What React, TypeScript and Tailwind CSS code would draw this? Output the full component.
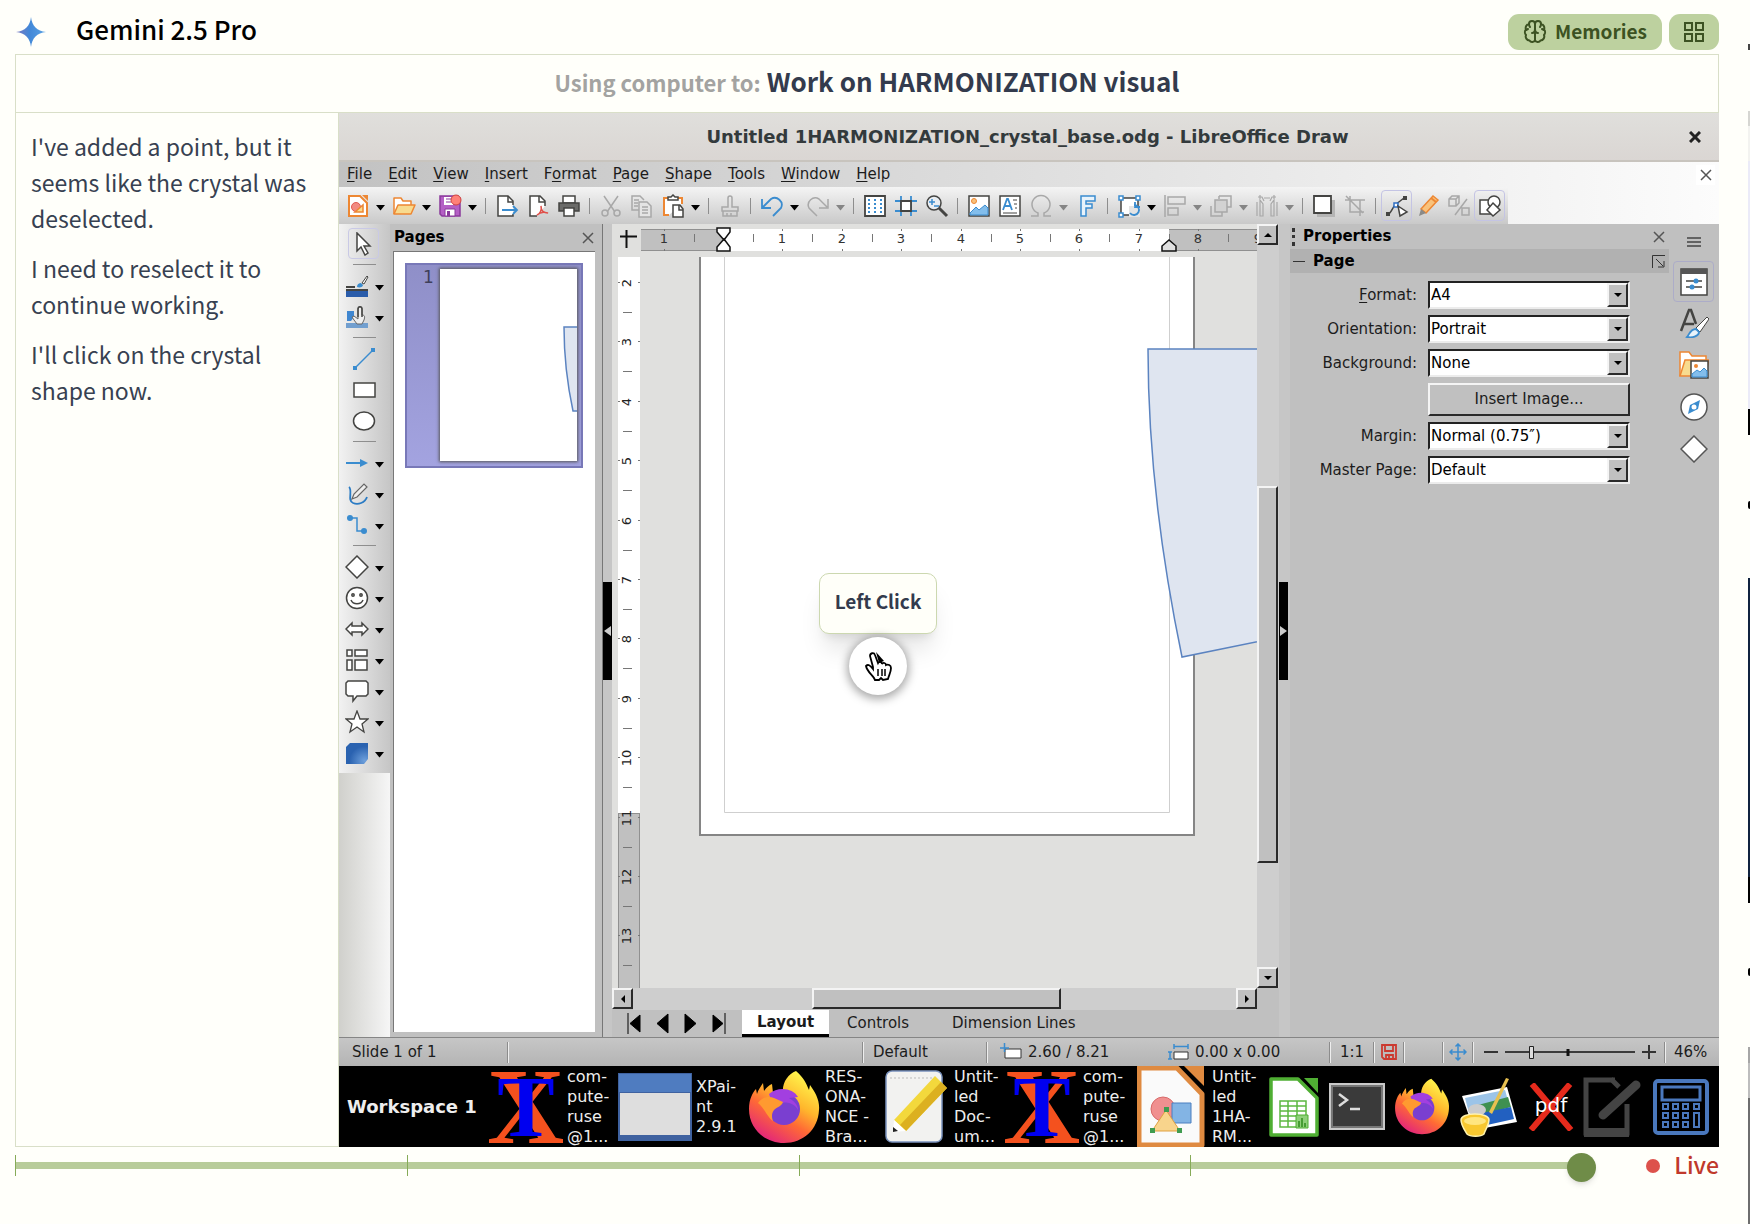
import React from 'react';
import clsx from 'clsx';

const UI_FONT = "font-['DejaVu_Sans',sans-serif]";

const DARK = '#444442';
const BLUE = '#3a8ccf';
const DIM = '#a8a8a8';

type IconName = keyof typeof ICONS;

const ICONS = {
    newDoc: (
        <g fill="none" stroke="#ed8733" strokeWidth="2">
            <path d="M3 2h11l7 7v13H3z" fill="#fff" />
            <path d="M16 1h6v6z" fill="#ed8733" stroke="none" />
            <circle cx="10" cy="13" r="4.500" fill="#f28b82" stroke="#e05a52" strokeWidth="1" />
            <path d="M9 18l8-7v7z" fill="#f8db8f" strokeWidth="1.500" />
        </g>
    ),
    open: (
        <g stroke="#ed8733" strokeWidth="1.500" strokeLinejoin="round">
            <path d="M2 20V4h7l2 3h8v4" fill="#fff" />
            <path d="M6 11h17l-4 9H2z" fill="#f8db8f" />
        </g>
    ),
    save: (
        <g>
            <path d="M2 2h18l2 2v18H4l-2-2z" fill="#b45fc5" stroke="#8a3a9c" strokeWidth="1.500" />
            <path d="M6 3h9v8H6z" fill="#fff" />
            <path d="M8 5h6M8 8h5" stroke="#8a3a9c" />
            <path d="M7 15h10v7H7z" fill="#fff" stroke="#8a3a9c" />
            <path d="M9 17h3v5H9z" fill="#8a3a9c" />
            <circle cx="18" cy="6" r="5" fill="#ff8078" stroke="#d0453f" />
        </g>
    ),
    exportDoc: (
        <g fill="none" stroke={DARK} strokeWidth="1.500">
            <path d="M18 11V7l-5-5H3v20h15v-2" fill="#fff" />
            <path d="M13 2v6h5" />
            <path d="M7 16h15M18 12l4 4-4 4" stroke={BLUE} strokeWidth="1.800" />
        </g>
    ),
    pdf: (
        <g fill="none" stroke={DARK} strokeWidth="1.500">
            <path d="M11 22H4V2h10l5 5v5" fill="#fff" />
            <path d="M13 2v6h6" />
            <path d="M15 12c1 4-1 8-4 9 3-3 8-3 11-2-4 0-7-2-7-7z" stroke="#e0504a" />
        </g>
    ),
    print: (
        <g stroke={DARK} strokeWidth="1.500">
            <path d="M6 2h12v7H6z" fill="#fff" />
            <path d="M2 9h20v8H2z" fill="#6b6b69" />
            <path d="M7 14h10v8H7z" fill="#fff" />
        </g>
    ),
    cut: (
        <g fill="none" stroke={DIM} strokeWidth="1.500">
            <path d="M5 2l11 16M19 2L8 18" />
            <circle cx="6" cy="19" r="3" />
            <circle cx="18" cy="19" r="3" />
        </g>
    ),
    copy: (
        <g fill="none" stroke={DIM} strokeWidth="1.500">
            <path d="M9 16H2V2h8l4 4" />
            <path d="M9 8h8l4 4v11H9z" fill="#e4e4e4" />
            <path d="M4 6h5M4 9h4M4 12h4M12 13h6M12 16h6M12 19h6" />
        </g>
    ),
    paste: (
        <g fill="none" strokeWidth="2">
            <path d="M8 21H3V4h18v6" stroke="#ed8733" fill="#fff" />
            <path d="M7 6V3h3l2-2 2 2h3v3z" fill="#fff" stroke={DARK} strokeWidth="1.500" />
            <path d="M12 11h7l3 4v8H12z" fill="#fff" stroke={DARK} strokeWidth="1.500" />
            <path d="M18 11v5h4" stroke={DARK} strokeWidth="1.500" />
        </g>
    ),
    clone: (
        <g fill="none" stroke={DIM} strokeWidth="1.500">
            <path d="M10 13V4a2 2 0 0 1 4 0v9h6v4H4v-4z" />
            <path d="M5 17v5h14v-5M9 22v-3M13 22v-3" />
        </g>
    ),
    undo: <path d="M2 5v9h9M3 13L11 5a7 7 0 0 1 10 9l-8 8" fill="none" stroke={BLUE} strokeWidth="1.800" />,
    redo: <path d="M22 5v9h-9M21 13L13 5a7 7 0 0 0-10 9l8 8" fill="none" stroke={DIM} strokeWidth="1.500" />,
    grid: (
        <g>
            <path d="M2 2h20v20H2z" fill="#fff" stroke={DARK} strokeWidth="1.800" />
            <path d="M5 6h14M5 10h14M5 14h14M5 18h14" stroke={BLUE} strokeWidth="2" strokeDasharray="2 4" />
        </g>
    ),
    guides: (
        <g fill="none">
            <path d="M1 7h22M1 17h22M7 2v20M17 2v20" stroke={BLUE} strokeWidth="1.800" />
            <path d="M7 7h10v10H7z" fill="#fff" stroke={DARK} strokeWidth="1.800" />
        </g>
    ),
    zoom: (
        <g fill="none" stroke={DARK} strokeWidth="1.500">
            <circle cx="9" cy="9" r="7" fill="#e9eef3" />
            <path d="M14 14l8 8" strokeWidth="3" />
            <path d="M4 8h6M7 5v6M9 12h5" stroke={BLUE} />
        </g>
    ),
    image: (
        <g>
            <path d="M2 2h20v20H2z" fill="#fff" stroke={DARK} strokeWidth="1.500" />
            <path d="M3 19l6-6 3 3 6-5 3 3v7H3z" fill="#83beec" stroke={BLUE} />
            <circle cx="7" cy="7" r="2.500" fill="#f9c27b" stroke="#ed8733" />
        </g>
    ),
    textBox: (
        <g>
            <path d="M2 2h20v20H2z" fill="#fff" stroke={DARK} strokeWidth="1.500" />
            <path d="M5 16l4-11h1l4 11M6 12h7" fill="none" stroke={BLUE} strokeWidth="1.800" />
            <path d="M15 6h4M16 10h3M17 14h2M5 19h14" stroke={DARK} />
        </g>
    ),
    omega: <path d="M2 22h7v-3a9 9 0 1 1 6 0v3h7" fill="none" stroke={DIM} strokeWidth="1.500" />,
    fontwork: <path d="M6 2h14v5h-9v3h6v4h-6v8H6z" fill="#e8f3fb" stroke={BLUE} strokeWidth="1.500" />,
    transform: (
        <g fill="none">
            <path d="M4 4h17v17H4z" fill="#fff" stroke={DARK} strokeWidth="1.500" />
            <path d="M12 12h11v11H12z" fill="#e4e4e4" />
            <path d="M13 19a5 5 0 1 0 4-8M18 8v5h5" stroke={BLUE} strokeWidth="1.800" />
            <path d="M2 2h4v4H2zM19 2h4v4h-4zM2 19h4v4H2z" fill="#fff" stroke={BLUE} strokeWidth="1.500" />
        </g>
    ),
    align: <path d="M2 1v22M5 3h17v7H5zM5 14h10v7H5z" fill="none" stroke={DIM} strokeWidth="1.500" />,
    arrange: (
        <g fill="none" stroke={DIM} strokeWidth="1.500">
            <path d="M10 2h12v11h-4M10 2v3M2 12v10h11v-4" />
            <path d="M6 6h12v12H6z" fill="#d2d2d2" />
        </g>
    ),
    distribute: <path d="M2 8v14M22 8v14M5 6v16h3V10zM19 6v16h-3V10zM3 3h4l2 4M21 3h-4l-2 4M5 1v4M19 1v4M9 4h6" fill="none" stroke={DIM} strokeWidth="1.200" />,
    shadow: (
        <g>
            <path d="M5 6h18v17H5z" fill="#b5b5b5" />
            <path d="M2 2h17v17H2z" fill="#fff" stroke={DARK} strokeWidth="1.800" />
        </g>
    ),
    crop: <path d="M2 6h20M7 2v16h14M17 6v16M3 2l17 17" fill="none" stroke={DIM} strokeWidth="1.500" />,
    points: (
        <g fill="none">
            <path d="M4 20c3-3 4-7 6-9l9-7" stroke={DARK} strokeWidth="1.500" />
            <path d="M1 18h4v4H1zM18 2h4v4h-4z" fill={DARK} />
            <path d="M9 9h4v4H9z" fill="#fff" stroke="#2f6fc4" strokeWidth="1.500" />
            <path d="M13 12l9 6-7 4z" fill="#fff" stroke={DARK} strokeWidth="1.500" />
        </g>
    ),
    pencil: (
        <g>
            <path d="M5 15L17 2l5 4L10 19z" fill="#f9c27b" stroke="#ed8733" strokeWidth="1.500" />
            <path d="M5 15l5 4-7 3z" fill="#8a8a88" />
            <path d="M15 4l5 4" stroke="#ed8733" strokeWidth="2" />
        </g>
    ),
    extrusion: <path d="M2 5l3-3h7v7l-3 3H2zM2 5h7v7M9 5l3-3M20 5L8 21M15 14h7v7h-7z" fill="none" stroke={DIM} strokeWidth="1.500" />,
    shapes: (
        <g fill="#fff" stroke={DARK} strokeWidth="1.500">
            <path d="M2 6h12v14H2z" />
            <circle cx="16" cy="8" r="6" />
            <path d="M15 9l7 7-7 6-6-6z" />
        </g>
    ),
    pointer: <path d="M5 1v18l4-4 4 8 3-2-4-7h6z" fill="#fff" stroke={DARK} strokeWidth="1.500" />,
    lineColor: (
        <g>
            <path d="M1 17h22v6H1z" fill="#2a5caa" />
            <path d="M1 13h9M1 16h22" stroke={DARK} strokeWidth="2" />
            <path d="M12 13c0-3 2-4 4-4l2 2c0 2-3 3-6 2z" fill={BLUE} />
            <path d="M17 9l5-7 1 1-4 7z" fill="#fff" stroke={DARK} />
        </g>
    ),
    fillColor: (
        <g>
            <path d="M1 18h22v5H1z" fill="#729fcf" />
            <path d="M2 16V6h7v6l-3 4z" fill="#3f86d0" />
            <path d="M9 15l-2-3 2-1 4 3V4c0-3 4-3 4 0v6c3 0 3 2 2 5l-2 4h-5z" fill="#eee" stroke="#666" />
            <path d="M13 12V4c0-3 4-3 4 0v8" fill="none" stroke={DARK} strokeWidth="1.500" />
        </g>
    ),
    line: (
        <g>
            <path d="M3 21L21 3" stroke={BLUE} strokeWidth="1.500" />
            <path d="M1 19h4v4H1zM19 1h4v4h-4z" fill={BLUE} />
        </g>
    ),
    rect: <path d="M2 5h21v14H2z" fill="#fff" stroke={DARK} strokeWidth="1.500" />,
    ellipse: <ellipse cx="12" cy="12" rx="10.500" ry="9" fill="#fff" stroke={DARK} strokeWidth="1.500" />,
    arrowLine: (
        <g fill={BLUE}>
            <path d="M1 11h15v2H1z" />
            <path d="M15 8l8 4-8 4z" />
        </g>
    ),
    curve: (
        <g fill="none">
            <path d="M4 5c4 3-2 14 4 16 5 2 12 0 14-6" stroke="#2a7bc4" strokeWidth="1.800" />
            <path d="M7 17l2-5L19 2l3 3-10 10z" fill="#eee" stroke="#666" strokeWidth="1.200" />
        </g>
    ),
    connector: (
        <g fill={BLUE}>
            <path d="M5 5h7v13h8" fill="none" stroke={BLUE} strokeWidth="1.500" />
            <circle cx="5" cy="5" r="3" />
            <circle cx="19" cy="18" r="3" />
        </g>
    ),
    diamond: <path d="M12 1l11 11-11 11L1 12z" fill="#fff" stroke={DARK} strokeWidth="1.500" />,
    smiley: (
        <g fill="none" stroke={DARK} strokeWidth="1.500">
            <circle cx="12" cy="12" r="10.500" fill="#fff" />
            <path d="M6 14c2 5 10 5 12 0" />
            <circle cx="8" cy="9" r="1.200" />
            <circle cx="16" cy="9" r="1.200" />
        </g>
    ),
    doubleArrow: <path d="M1 12l6-6v3h10V6l6 6-6 6v-3H7v3z" fill="#fff" stroke={DARK} strokeWidth="1.500" />,
    flowchart: <path d="M2 2h5v6H2zM10 2h12v6H10zM2 12h5v10H2zM10 12h12v10H10z" fill="#fff" stroke={DARK} strokeWidth="1.500" />,
    callout: <path d="M3 2h18l2 2v11l-2 2H12l-4 5v-5H3l-2-2V4z" fill="#fff" stroke={DARK} strokeWidth="1.500" />,
    star: <path d="M12 1l3 8h8l-6 5 2 8-7-5-7 5 2-8-6-5h8z" fill="#fff" stroke={DARK} strokeWidth="1.300" />,
    solid: (
        <g>
            <defs>
                <radialGradient id="solid" cx="0.850" cy="0.850" r="0.700">
                    <stop offset="0" stopColor="#6ea0dc" />
                    <stop offset="1" stopColor="#2a62b0" />
                </radialGradient>
            </defs>
            <path d="M1 6l4-4h18v16l-4 5H1z" fill="url(#solid)" />
        </g>
    ),
};

type Tool = IconName | '|' | 'v' | 'x';

// '|' is a separator, 'v' an active drop-down arrow, 'x' a disabled one
const STANDARD_BAR: Tool[] = [
    'newDoc', 'v', 'open', 'v', 'save', 'v', '|',
    'exportDoc', 'pdf', 'print', '|',
    'cut', 'copy', 'paste', 'v', '|',
    'clone', '|', 'undo', 'v', 'redo', 'x', '|',
    'grid', 'guides', 'zoom', '|',
    'image', 'textBox', 'omega', 'x', 'fontwork', '|',
    'transform', 'v', 'align', 'x', 'arrange', 'x', 'distribute', 'x', '|',
    'shadow', 'crop', '|',
    'points', 'pencil', 'extrusion', 'shapes',
];

const DRAWING_BAR: [Tool, boolean][] = [
    ['pointer', false], ['|', false],
    ['lineColor', true], ['fillColor', true], ['|', false],
    ['line', false], ['rect', false], ['ellipse', false], ['|', false],
    ['arrowLine', true], ['curve', true], ['connector', true], ['|', false],
    ['diamond', true], ['smiley', true], ['doubleArrow', true], ['flowchart', true],
    ['callout', true], ['star', true], ['solid', true],
];

const MENUS: [string, string, string][] = [
    ['', 'F', 'ile'], ['', 'E', 'dit'], ['', 'V', 'iew'], ['', 'I', 'nsert'], ['F', 'o', 'rmat'],
    ['', 'P', 'age'], ['', 'S', 'hape'], ['', 'T', 'ools'], ['', 'W', 'indow'], ['', 'H', 'elp'],
];

const RAISED = 'border-2 border-t-[#f4f4f4] border-l-[#f4f4f4] border-b-[#2a2a2a] border-r-[#2a2a2a] bg-[#c0c0c0]';
const SUNKEN = 'border-2 border-t-[#222] border-l-[#222] border-b-[#ececec] border-r-[#ececec]';

const ToolIcon = ({ name }: { name: IconName }) => (
    <svg viewBox="0 0 24 24" className="size-6 shrink-0" aria-hidden="true">{ICONS[name]}</svg>
);

const Caret = ({ dim = false }: { dim?: boolean }) => (
    <svg viewBox="0 0 9 6" className="h-[6px] w-[9px]" aria-hidden="true">
        <path d="M0 0h9L4.500 5.500z" fill={dim ? '#858585' : '#000'} />
    </svg>
);

const Cross = ({ className }: { className: string }) => (
    <svg viewBox="0 0 12 12" className={className} aria-hidden="true">
        <path d="M1 1l10 10M11 1L1 11" stroke="currentColor" strokeWidth="1.500" fill="none" />
    </svg>
);

const Header = () => (
    <header className="flex h-[54px] items-center">
        <svg viewBox="0 0 32 32" className="mt-[10px] size-8" aria-hidden="true">
            <defs>
                <linearGradient id="gem" x1="0" y1="0" x2="1" y2="0">
                    <stop offset="0" stopColor="#7a78c0" />
                    <stop offset="0.450" stopColor="#4288d8" />
                    <stop offset="1" stopColor="#5aa2e4" />
                </linearGradient>
            </defs>
            <path d="M16 1c1 9 6 14 15 15-9 1-14 6-15 15-1-9-6-14-15-15 9-1 14-6 15-15z" fill="url(#gem)" />
        </svg>
        <h1 className="mt-1 ml-[29px] text-[26px] leading-8 font-medium text-black">Gemini 2.5 Pro</h1>
        <div className="mt-[10px] ml-auto flex gap-[7px]">
            <button className="flex h-9 items-center gap-2 rounded-[11px] bg-[#bdd19f] px-[15px] text-[19px] font-semibold text-[#3c5222]">
                <svg viewBox="0 0 24 24" className="size-6" fill="none" stroke="currentColor" strokeWidth="2" strokeLinecap="round" strokeLinejoin="round" aria-hidden="true">
                    <path d="M12 4a3 3 0 0 0-6 0 4 4 0 0 0-3 5.500A4 4 0 0 0 3 15a4 4 0 0 0 3.500 5.500A3 3 0 0 0 12 20zM12 4a3 3 0 0 1 6 0 4 4 0 0 1 3 5.500A4 4 0 0 1 21 15a4 4 0 0 1-3.500 5.500A3 3 0 0 1 12 20" />
                    <path d="M9 13c2 0 3-2 3-4 0 2 1 4 3 4M6 4c0 1 0 2 1 3M18 4c0 1 0 2-1 3M3 10l2-1M21 10l-2-1" />
                </svg>
                <span className="pb-[2px] leading-6">Memories</span>
            </button>
            <button className="flex h-9 w-[50px] items-center justify-center rounded-[11px] bg-[#bdd19f] text-[#3c5222]" aria-label="Grid view">
                <svg viewBox="0 0 20 20" className="size-5" fill="none" stroke="currentColor" strokeWidth="2" aria-hidden="true">
                    <path d="M1 1h7v7H1zM12 1h7v7h-7zM1 12h7v7H1zM12 12h7v7h-7z" />
                </svg>
            </button>
        </div>
    </header>
);

const Thoughts = () => (
    <aside className="flex w-[324px] shrink-0 flex-col gap-[14px] border-x border-b border-[#d9dfc8] px-[15px] py-[15px] text-[23px] leading-9 text-[#374151]">
        <p>I've added a point, but it seems like the crystal was deselected.</p>
        <p>I need to reselect it to continue working.</p>
        <p>I'll click on the crystal shape now.</p>
    </aside>
);

const TitleBar = () => (
    <div className="flex h-[49px] items-center border-b-2 border-[#c8c4be] bg-linear-to-b from-[#e0dfdc] to-[#dad6d3] px-[18px] text-[#333a3c]">
        <div className="w-[9px]" />
        <h2 className="flex-1 text-center text-[18px] font-bold">Untitled 1HARMONIZATION_crystal_base.odg - LibreOffice Draw</h2>
        <button aria-label="Close window">
            <svg viewBox="0 0 12 12" className="size-3" aria-hidden="true">
                <path d="M1 1l10 10M11 1L1 11" stroke="#222" strokeWidth="3" />
            </svg>
        </button>
    </div>
);

const MenuAndToolbar = () => (
    <div className="bg-linear-to-r from-[#c2c2c2] to-[#fcfcfc]">
        <nav className="flex h-[25px] items-center gap-4 pr-1 pl-2">
            {MENUS.map(([pre, key, post]) => (
                <button key={key + post}>{pre}<span className="underline underline-offset-2">{key}</span>{post}</button>
            ))}
            <button className="ml-auto flex h-5 w-[19px] items-center justify-center bg-white text-[#555]" aria-label="Close document">
                <Cross className="size-3" />
            </button>
        </nav>
        <div className="flex h-[37px] w-[1169px] items-center bg-linear-to-b from-[#f4f4f4] to-[#c9c9c9] pl-[3px]">
            {STANDARD_BAR.map((tool, i) => {
                if (tool === '|') return <div key={i} className="flex w-[11px] shrink-0 justify-center"><div className="h-4 w-px bg-[#8e8e8e]" /></div>;
                if (tool === 'v' || tool === 'x') {
                    return <button key={i} className="flex w-[15px] shrink-0 justify-center pt-1" aria-label="More"><Caret dim={tool === 'x'} /></button>;
                }
                return (
                    <button
                        key={i}
                        aria-label={tool}
                        className={clsx(
                            'flex h-[31px] w-[31px] shrink-0 items-center justify-center',
                            (tool === 'points' || tool === 'shapes') && 'rounded-sm border border-[#c4c4e4]'
                        )}
                    >
                        <ToolIcon name={tool} />
                    </button>
                );
            })}
        </div>
    </div>
);

const DrawingBar = () => (
    <div className="flex w-[51px] shrink-0 flex-col bg-linear-to-r from-[#d0d0cc] to-[#f6f6f6]">
        <div className="flex h-[549px] flex-col bg-linear-to-r from-[#f2f2f2] to-[#c6c6c6] pt-1">
            {DRAWING_BAR.map(([tool, menu], i) => tool === '|' ? (
                <div key={i} className="flex h-[11px] items-center pl-[14px]"><div className="h-px w-[23px] bg-[#8e8e8e]" /></div>
            ) : (
                <div key={i} className={clsx('flex h-[31px] items-center', menu ? 'pl-[6px]' : 'pl-[9px]')}>
                    <button
                        aria-label={tool}
                        className={clsx(
                            'flex h-[31px] items-center justify-center',
                            menu ? 'w-6' : 'w-[31px]',
                            tool === 'pointer' && 'rounded-sm border border-[#c9c9e6]'
                        )}
                    >
                        <ToolIcon name={tool as IconName} />
                    </button>
                    {menu && <button className="ml-[6px] pt-1" aria-label="More"><Caret /></button>}
                </div>
            ))}
        </div>
    </div>
);

const PagesPanel = () => (
    <div className="flex w-[213px] shrink-0 flex-col border-r border-[#777] bg-[#c0c0c0] pr-[7px] pb-[5px] pl-[3px]">
        <div className="flex h-[27px] items-center justify-between pr-px pl-px text-[15px] font-bold text-black">
            Pages
            <button className="text-[#555]" aria-label="Close pages"><Cross className="size-3" /></button>
        </div>
        <div className="flex-1 border-t border-l border-[#777] bg-white pt-[11px] pl-[11px]">
            <div className="flex h-[205px] w-[178px] justify-between border-2 border-[#7878b8] bg-linear-to-b from-[#8f8fc8] to-[#a3a3e0] pt-1 pr-1 pl-4">
                <span className="text-[17px] leading-4 text-[#3f3f5a]">1</span>
                <svg viewBox="0 0 137 192" className="h-[192px] w-[137px] bg-white shadow-[0_0_3px_1px_#555]" aria-label="Slide 1">
                    <path d="M140 58H124c0 28 3 56 9 84h7" fill="#dfe5f0" stroke="#5b83c0" strokeWidth="1.500" />
                </svg>
            </div>
        </div>
    </div>
);

const Splitter = ({ side }: { side: 'left' | 'right' }) => (
    <div className={clsx('flex shrink-0 flex-col justify-center bg-[#c6c6c6]', side === 'left' ? 'w-[9px]' : 'w-[11px]')}>
        <button className="flex h-[98px] w-[9px] items-center justify-center bg-black" aria-label="Collapse panel">
            <svg viewBox="0 0 7 10" className="h-[10px] w-[7px]" aria-hidden="true">
                <path d={side === 'left' ? 'M7 0v10L0 5z' : 'M0 0v10l7-5z'} fill="#ccc" />
            </svg>
        </button>
    </div>
);

const STEP = 59.4;

const HorizontalRuler = () => (
    <svg className="h-full w-full" aria-label="Horizontal ruler">
        <rect width="100%" height="22" y="5" fill="#c0c0c0" />
        <path d="M0 5.500h2000M0 26.500h2000" stroke="#909090" />
        <rect x="83" y="5" width="445" height="22" fill="#fff" />
        {Array.from({ length: 11 }, (_, i) => {
            const x = Math.round(82 + (i - 1) * STEP);
            return (
                <g key={i} stroke="#777">
                    <path d={`M${x + 30}.5 10v8`} />
                    {i !== 1 && <path d={`M${x}.5 5v2M${x}.5 25v2`} />}
                    {i !== 1 && <text x={x} y="19" textAnchor="middle" fontSize="13" fill="#333" stroke="none">{Math.abs(i - 1)}</text>}
                </g>
            );
        })}
        <path d="M76 4h13v4l-6 8-7-8zM76 27h13v-4l-6-8-7 8z" fill="#fff" stroke="#111" strokeWidth="1.500" />
        <path d="M521 27v-5l7-6 7 6v5z" fill="#e0e0e0" stroke="#111" strokeWidth="1.500" />
    </svg>
);

const VerticalRuler = () => (
    <svg className="h-full w-[22px] shrink-0" aria-label="Vertical ruler">
        <rect width="22" height="100%" fill="#c0c0c0" />
        <path d="M.5 0v2000M21.500 0v2000" stroke="#909090" />
        <rect width="22" height="556" fill="#fff" />
        <path d="M0 556.500h22" stroke="#909090" />
        {Array.from({ length: 12 }, (_, i) => {
            const y = Math.round(25 + i * STEP);
            return (
                <g key={i} stroke="#777">
                    <path d={`M5 ${y + 30}.5h9M0 ${y}.5h2M20 ${y}.5h2`} />
                    <text transform={`translate(13 ${y + 1}) rotate(-90)`} textAnchor="middle" fontSize="13" fill="#222" stroke="none">{i + 2}</text>
                </g>
            );
        })}
    </svg>
);

const Canvas = () => (
    <div className="relative min-w-0 flex-1 overflow-hidden bg-[#e0e0de]">
        <svg className="absolute inset-0 h-full w-full" aria-label="Drawing page">
            <rect x="60" y="-20" width="494" height="598" fill="#fff" stroke="#858585" strokeWidth="2" />
            <path d="M84.500 0v555.500h445V0" fill="none" stroke="#cfcfcf" />
            <path d="M700 92H508c0 100 12 202 34 308l158-32" fill="#dfe5f0" stroke="#5b83c0" strokeWidth="1.500" />
        </svg>
        <div className="absolute top-[316px] left-[179px] flex w-[118px] flex-col items-center gap-[3px]">
            <div className="flex h-[61px] w-full items-center justify-center rounded-[10px] border border-[#ccd8b0] bg-[#fffff9] pb-1 font-['Noto_Sans_CJK_SC',sans-serif] text-[19px] font-bold whitespace-nowrap text-[#333b4d] shadow-xl">
                Left Click
            </div>
            <div className="flex size-[58px] items-center justify-center rounded-full bg-white shadow-[0_2px_10px_2px_rgba(0,0,0,0.35)]">
                <svg viewBox="0 0 28 30" className="h-[30px] w-7" aria-hidden="true">
                    <path d="M9 16L6 5c0-3 4-4 5-1l3 8c1-2 4-1 4 1 1-2 4-1 4 1 2-1 5 0 5 3 0 4-2 7-3 11l-5 1-2-2-2 2h-4c-1-4-8-8-9-14 2-2 4-1 7 3z" fill="#fff" stroke="#000" strokeWidth="1.800" />
                    <path d="M14 18v7M18 18v7M21 18v7" stroke="#000" strokeWidth="1.500" />
                    <path d="M12 1l8 9-5 2z" fill="#000" />
                </svg>
            </div>
        </div>
    </div>
);

const ARROWS = {
    up: 'M0 6h8L4 2z',
    down: 'M0 2h8L4 6z',
    left: 'M6 0v8L2 4z',
    right: 'M2 0v8l4-4z',
};

const ScrollButton = ({ dir }: { dir: keyof typeof ARROWS }) => (
    <button className={clsx('flex size-[21px] shrink-0 items-center justify-center', RAISED)} aria-label={`Scroll ${dir}`}>
        <svg viewBox="0 0 8 8" className="size-2" aria-hidden="true"><path d={ARROWS[dir]} /></svg>
    </button>
);

const NAV_SHAPES = ['M1 0v21M13 2v17L3 10.500z', 'M13 1v19L2 10.500z', 'M2 1v19l11-9.500z', 'M14 0v21M2 2v17l10-8.500z'];

const Workspace = () => (
    <div className="flex min-w-0 flex-1 flex-col">
        <div className="flex min-h-0 flex-1">
            <div className="flex min-w-0 flex-1 flex-col bg-[#e0e0de]">
                <div className="flex h-[33px] shrink-0">
                    <svg viewBox="0 0 29 33" className="h-[33px] w-[29px] shrink-0" aria-hidden="true">
                        <path d="M8 12.500h17M14.500 6v18" stroke="#111" strokeWidth="2" />
                    </svg>
                    <div className="min-w-0 flex-1 overflow-hidden"><HorizontalRuler /></div>
                </div>
                <div className="flex min-h-0 flex-1 pl-[6px]">
                    <VerticalRuler />
                    <Canvas />
                </div>
            </div>
            <div className="flex w-[22px] shrink-0 flex-col bg-[#cecece]">
                <ScrollButton dir="up" />
                <div className="flex-[243]" />
                <div className={clsx('w-[21px] flex-[375]', RAISED)} />
                <div className="flex-[105]" />
                <ScrollButton dir="down" />
            </div>
        </div>
        <div className="flex h-[22px] shrink-0 bg-[#c0c0c0] pr-[22px]">
            <ScrollButton dir="left" />
            <div className="flex-[180] bg-[#cecece]" />
            <div className={clsx('h-[21px] flex-[247]', RAISED)} />
            <div className="flex-[176] bg-[#cecece]" />
            <ScrollButton dir="right" />
        </div>
        <div className="flex h-[27px] shrink-0 items-center bg-[#c0c0c0] pl-[15px]">
            <div className="flex w-[115px] gap-[13px]">
                {NAV_SHAPES.map((d) => (
                    <button key={d} aria-label="Move to layer">
                        <svg viewBox="0 0 15 21" className="h-[21px] w-[15px]" aria-hidden="true"><path d={d} stroke="#000" strokeWidth="1" /></svg>
                    </button>
                ))}
            </div>
            <button className="h-[27px] w-[87px] border-b-[3px] border-black bg-white text-[15px] font-bold">Layout</button>
            <button className="ml-[18px]">Controls</button>
            <button className="ml-[43px]">Dimension Lines</button>
        </div>
    </div>
);

const FIELDS: { id: string; label: React.ReactNode; value: string }[] = [
    { id: 'format', label: <><u className="underline-offset-2">F</u>ormat:</>, value: 'A4' },
    { id: 'orientation', label: 'Orientation:', value: 'Portrait' },
    { id: 'background', label: 'Background:', value: 'None' },
    { id: 'margin', label: 'Margin:', value: 'Normal (0.75″)' },
    { id: 'master', label: 'Master Page:', value: 'Default' },
];

const Field = ({ id, label, value }: { id: string; label: React.ReactNode; value: string }) => (
    <>
        <label htmlFor={id} className="text-right">{label}</label>
        <div className="relative h-[28px]">
            <select id={id} defaultValue={value} className={clsx('h-full w-full appearance-none bg-white pl-px text-[15px] text-black', SUNKEN)}>
                <option>{value}</option>
            </select>
            <span className={clsx('pointer-events-none absolute top-[2px] right-[2px] flex h-6 w-[21px] items-center justify-center', RAISED)}>
                <svg viewBox="0 0 8 8" className="size-2" aria-hidden="true"><path d={ARROWS.down} /></svg>
            </span>
        </div>
    </>
);

const PropertiesPanel = () => (
    <div className="flex w-[379px] shrink-0 flex-col">
        <div className="flex h-[25px] items-center pr-1 text-[15px] font-bold text-black">
            <div className="ml-[2px] h-[18px] border-l-[3px] border-dotted border-[#333]" />
            <h3 className="ml-2 flex-1">Properties</h3>
            <button className="text-[#555]" aria-label="Close properties"><Cross className="size-3" /></button>
        </div>
        <div className="flex h-6 items-center bg-[#b1b1b1] pr-1 pl-[3px] text-[15px] font-bold text-black">
            <div className="h-px w-3 bg-[#333]" />
            <h4 className="ml-2 flex-1">Page</h4>
            <svg viewBox="0 0 13 13" className="size-[13px]" fill="none" stroke="#333" aria-hidden="true">
                <path d="M.5 13V.5H13M4 4l7 7M12 6v6H6" />
            </svg>
        </div>
        <div className="mt-2 grid grid-cols-[127px_202px] items-center gap-x-[11px] gap-y-[6px]">
            {FIELDS.slice(0, 3).map((f) => <Field key={f.id} {...f} />)}
            <button className={clsx('col-start-2 h-[33px]', RAISED)}>Insert Image...</button>
            {FIELDS.slice(3).map((f) => <Field key={f.id} {...f} />)}
        </div>
    </div>
);

const DeckBar = () => (
    <div className="flex w-[50px] shrink-0 flex-col items-center pr-px">
        <button className="mt-[13px] mb-[14px]" aria-label="Sidebar settings">
            <svg viewBox="0 0 14 10" className="h-[10px] w-[14px]" stroke="#444" strokeWidth="1.500" aria-hidden="true">
                <path d="M0 1h14M0 5h14M0 9h14" />
            </svg>
        </button>
        <button className="flex h-[41px] w-[41px] items-center justify-center rounded-sm border border-[#acacc8]" aria-label="Properties">
            <svg viewBox="0 0 28 28" className="size-7" aria-hidden="true">
                <path d="M1 1h26v26H1z" fill="#fff" stroke={DARK} strokeWidth="1.500" />
                <path d="M1 1h26v5H1z" fill="#555" />
                <path d="M6 13h16M6 19h16" stroke={DARK} strokeWidth="1.500" />
                <circle cx="16" cy="13" r="2.500" fill={BLUE} />
                <circle cx="12" cy="19" r="2.500" fill={BLUE} />
            </svg>
        </button>
        <button className="flex h-[42px] items-center" aria-label="Styles">
            <svg viewBox="0 0 30 30" className="size-[30px]" fill="none" aria-hidden="true">
                <path d="M2 23L10 2h2l5 14M5 16h10" stroke={DARK} strokeWidth="2.500" />
                <path d="M17 20L28 9l2 2-9 13z" fill="#fff" stroke={DARK} />
                <path d="M8 29c2-2 3-8 9-8l3 3c0 4-6 6-12 5z" fill="#e8f3fb" stroke={BLUE} strokeWidth="1.800" />
            </svg>
        </button>
        <button className="flex h-[42px] items-center" aria-label="Gallery">
            <svg viewBox="0 0 30 30" className="size-[30px]" aria-hidden="true">
                <path d="M1 26V2h9l3 4h14v5" fill="#fff" stroke="#ed8733" strokeWidth="1.500" />
                <path d="M6 10h24l-4 16H1z" fill="#f8db8f" stroke="#ed8733" strokeWidth="1.500" />
                <path d="M12 11h17v17H12z" fill="#fff" stroke={DARK} strokeWidth="1.500" />
                <path d="M13 24l5-4 3 2 4-4 3 3v6H13z" fill="#83beec" stroke={BLUE} />
                <circle cx="17" cy="16" r="2" fill="#ed8733" />
            </svg>
        </button>
        <button className="flex h-[42px] items-center" aria-label="Navigator">
            <svg viewBox="0 0 28 28" className="size-7" aria-hidden="true">
                <circle cx="14" cy="14" r="13" fill="#fff" stroke="#555" strokeWidth="1.500" />
                <path d="M8 21l2-9 10-5-2 9z" fill={BLUE} />
                <circle cx="14" cy="14" r="2.500" fill="#fff" />
            </svg>
        </button>
        <button className="flex h-[42px] items-center" aria-label="Shapes">
            <svg viewBox="0 0 28 28" className="size-7" aria-hidden="true">
                <path d="M14 1l13 13-13 13L1 14z" fill="#fff" stroke="#555" strokeWidth="1.500" />
            </svg>
        </button>
    </div>
);

const Divider = () => <div className="h-[21px] w-[2px] shrink-0 border-l border-[#8c8c8c] bg-[#eee]" />;

const StatusBar = () => (
    <div className="flex h-[29px] shrink-0 items-center border-t border-[#858585] bg-linear-to-b from-[#c6c6c6] to-[#b4b4b4]">
        <span className="w-[168px] pl-[13px]">Slide 1 of 1</span>
        <Divider />
        <span className="flex-1" />
        <Divider />
        <span className="w-[122px] pl-[9px]">Default</span>
        <Divider />
        <span className="flex w-[167px] items-center gap-[6px] pl-3">
            <svg viewBox="0 0 22 18" className="h-[18px] w-[22px]" aria-hidden="true">
                <path d="M5 6h16v9H5z" fill="#fff" stroke="#333" />
                <path d="M0 5h9M4.500 0v9" stroke={BLUE} strokeWidth="1.500" />
            </svg>
            2.60 / 8.21
        </span>
        <span className="flex w-[174px] items-center gap-[6px] pl-3">
            <svg viewBox="0 0 22 18" className="h-[18px] w-[22px]" aria-hidden="true">
                <path d="M7 9h14v7H7z" fill="#fff" stroke="#333" />
                <path d="M7 1v5M21 1v5M7 3.500h14M1 9h4M1 16h4M3 9v7" stroke={BLUE} strokeWidth="1.500" />
            </svg>
            0.00 x 0.00
        </span>
        <Divider />
        <span className="w-[42px] text-center">1:1</span>
        <Divider />
        <span className="flex w-7 justify-center">
            <svg viewBox="0 0 16 16" className="size-4" fill="none" stroke="#cc3a30" strokeWidth="1.800" aria-hidden="true">
                <path d="M1 1h14v14H3l-2-2zM4 1v6h8V1M5 15v-4h7v4M8 12v3" />
            </svg>
        </span>
        <Divider />
        <span className="w-[37px]" />
        <Divider />
        <span className="flex w-7 justify-center">
            <svg viewBox="0 0 18 18" className="size-[18px]" fill="none" stroke={BLUE} strokeWidth="1.500" aria-hidden="true">
                <path d="M9 1v16M1 9h16M6.500 3.500L9 1l2.500 2.500M6.500 14.500L9 17l2.500-2.500M3.500 6.500L1 9l2.500 2.500M14.500 6.500L17 9l-2.500 2.500" />
            </svg>
        </span>
        <Divider />
        <svg viewBox="0 0 190 20" className="h-5 w-[190px]" aria-label="Zoom slider">
            <path d="M10 10h14M168 10h14M175 3v14" stroke="#333" strokeWidth="2" />
            <path d="M31 10h130" stroke="#111" strokeWidth="1.500" />
            <path d="M94 7v7" stroke="#111" strokeWidth="3" />
            <path d="M55.500 4.500h4v12h-4z" fill="#ddd" stroke="#222" />
        </svg>
        <Divider />
        <span className="w-[53px] pl-2">46%</span>
    </div>
);

const XTerm = () => (
    <svg viewBox="0 0 74 74" className="size-[74px]" aria-hidden="true">
        <g className="font-['Liberation_Serif',serif] font-bold" textAnchor="middle">
            <text x="37" y="73" fontSize="108" fill="#f4511e">X</text>
            <text x="37" y="66" fontSize="86" fill="#0000f0">T</text>
        </g>
    </svg>
);

const XPaint = () => (
    <svg viewBox="0 0 74 68" className="h-[68px] w-[74px]" aria-hidden="true">
        <path d="M0 0h74v68H0z" fill="#3f62a0" />
        <path d="M1 1h72v18H1z" fill="#4f7cc0" />
        <path d="M2 20h70v42H2z" fill="#dedede" />
    </svg>
);

const Firefox = ({ className }: { className: string }) => (
    <svg viewBox="0 0 72 74" className={className} aria-hidden="true">
        <defs>
            <linearGradient id="fox" x1="0.800" y1="0.100" x2="0.250" y2="1">
                <stop offset="0" stopColor="#fff14a" />
                <stop offset="0.350" stopColor="#ffb62c" />
                <stop offset="0.600" stopColor="#ff6a35" />
                <stop offset="1" stopColor="#e02080" />
            </linearGradient>
        </defs>
        <path d="M48 1c8 7 10 12 13 19l1-5c5 7 10 15 9 25-1 20-16 33-35 33S1 59 1 39c0-10 4-17 7-20l1 5c1-4 4-8 6-11l1 8c3-4 5-6 8-7l1 9c4-1 7-2 10-1-1-9 5-18 13-21z" fill="url(#fox)" />
        <circle cx="36" cy="39" r="16" fill="#7a3fd0" />
        <path d="M21 24c9-8 24-6 29 3l-9 1c8 5 9 9 9 12-4-8-14-8-17-7-7 2-10-2-12-9z" fill="#a23fe0" />
        <path d="M10 33c4-6 11-7 16-5l9 4c-1 4-6 5-9 8-3 4-2 8-1 11-5-3-8-12-15-18z" fill="#ff9a30" />
    </svg>
);

const Notepad = () => (
    <svg viewBox="0 0 64 73" className="ml-2 h-[73px] w-16" aria-hidden="true">
        <rect x="1" y="1" width="56" height="71" rx="6" fill="#f2f2f0" stroke="#7b93bd" strokeWidth="1.500" />
        <path d="M5 8h48" stroke="#bbb" strokeDasharray="2 2" />
        <path d="M9 50L50 6l12 12-41 43z" fill="#f3d83c" />
        <path d="M15 55L56 12l6 6-41 43z" fill="#dcb020" />
        <path d="M9 50l12 11-13 1z" fill="#fff" />
        <path d="M8 57l5 4-5 1z" fill="#222" />
    </svg>
);

const DrawApp = () => (
    <svg viewBox="0 0 68 81" className="h-[81px] w-[68px]" aria-hidden="true">
        <path d="M2 2h38l25 26v51H2z" fill="#fafafa" stroke="#df8a40" strokeWidth="5" strokeLinejoin="round" />
        <path d="M47 0h20v20z" fill="#df8a40" />
        <circle cx="26" cy="43" r="12" fill="#f09090" stroke="#d86a6a" />
        <path d="M35 37h19v20H35z" fill="#83b4e4" stroke="#4a7ec0" />
        <path d="M29 44L15 65h28z" fill="#f8d48c" stroke="#e0a040" />
        <path d="M27 41h5v5h-5zM13 62h5v5h-5zM40 62h5v5h-5z" fill="#3f9b50" />
    </svg>
);

const CalcApp = () => (
    <svg viewBox="0 0 50 60" className="h-[60px] w-[50px]" aria-hidden="true">
        <path d="M2 2h27l19 19v37H2z" fill="#fff" stroke="#4fae33" strokeWidth="3.500" strokeLinejoin="round" />
        <path d="M35 1h14v15z" fill="#4fae33" />
        <path d="M11 24h26v26H11zM11 29h26M11 34h26M11 39h26M11 44h26M19 24v26M28 24v26" fill="none" stroke="#5cb840" strokeWidth="1.500" />
        <path d="M27 38h12v13H27z" fill="#8ed07a" stroke="#4fae33" />
        <path d="M30 50v-6M33 50v-9M36 50v-4" stroke="#2f8a1c" strokeWidth="1.500" />
    </svg>
);

const TerminalApp = () => (
    <svg viewBox="0 0 56 47" className="h-[47px] w-14" aria-hidden="true">
        <path d="M1 1h54v45H1z" fill="#333" stroke="#c9c9c9" strokeWidth="3" />
        <path d="M3 3h50v41H3z" fill="#3a3a3a" stroke="#777" strokeWidth="2" />
        <path d="M10 11l8 6-8 6M21 26h10" fill="none" stroke="#ddd" strokeWidth="2.500" />
    </svg>
);

const PaintApp = () => (
    <svg viewBox="0 0 58 60" className="h-[60px] w-[58px]" aria-hidden="true">
        <path d="M2 19l45-9 10 35-43 8z" fill="#fff" />
        <path d="M5 21l40-8 4 14-40 9z" fill="#9cc4e8" />
        <path d="M18 28l30-8 3 10-36 10z" fill="#3f9050" />
        <path d="M17 37l34-7 3 12-36 8z" fill="#2260c0" />
        <ellipse cx="17" cy="33" rx="9" ry="6" fill="#ccc" />
        <path d="M1 43c0-8 28-8 28 0 0 5-3 8-5 14-3 3-14 3-17 0C4 52 1 48 1 43z" fill="#f8c830" stroke="#fff3b0" strokeWidth="1.500" />
        <ellipse cx="15" cy="44" rx="11" ry="4" fill="#ffe680" />
        <path d="M29 35L46 1l3 1-17 35z" fill="#e8c050" />
    </svg>
);

const XPdf = () => (
    <svg viewBox="0 0 46 48" className="h-12 w-[46px]" aria-hidden="true">
        <path d="M4 1l39 46M42 1L3 47" stroke="#e52a1c" strokeWidth="6" />
        <text x="23" y="29" textAnchor="middle" fontSize="20" fill="#fff">pdf</text>
    </svg>
);

const EditApp = () => (
    <svg viewBox="0 0 60 60" className="size-[60px]" fill="none" aria-hidden="true">
        <path d="M32 3H3v53h41V27" stroke="#444" strokeWidth="5" />
        <path d="M1 51h45v9H1z" fill="#444" />
        <path d="M28 2l8 8" stroke="#444" strokeWidth="5" />
        <path d="M20 38L53 8" stroke="#444" strokeWidth="9" strokeLinecap="round" />
    </svg>
);

const Calculator = () => (
    <svg viewBox="0 0 56 56" className="size-14" fill="none" stroke="#4a78bd" aria-hidden="true">
        <rect x="2" y="2" width="52" height="52" rx="3" strokeWidth="4" />
        <path d="M9 8h38v13H9z" strokeWidth="3" />
        <path d="M10 25h5v5h-5zM20 25h5v5h-5zM30 25h5v5h-5zM41 25h5v5h-5zM10 34h5v5h-5zM20 34h5v5h-5zM30 34h5v5h-5zM10 43h5v5h-5zM20 43h5v5h-5zM30 43h5v5h-5zM41 34h5v14h-5z" strokeWidth="2" />
    </svg>
);

const TASKS: { lines: string[]; icon: React.ReactNode }[] = [
    { lines: ['com-', 'pute-', 'ruse', '@1...'], icon: <XTerm /> },
    { lines: ['XPai-', 'nt', '2.9.1'], icon: <XPaint /> },
    { lines: ['RES-', 'ONA-', 'NCE -', 'Bra...'], icon: <Firefox className="h-[74px] w-[72px]" /> },
    { lines: ['Untit-', 'led', 'Doc-', 'um...'], icon: <Notepad /> },
    { lines: ['com-', 'pute-', 'ruse', '@1...'], icon: <XTerm /> },
    { lines: ['Untit-', 'led', '1HA-', 'RM...'], icon: <DrawApp /> },
];

const Taskbar = () => (
    <div className="flex h-[81px] shrink-0 items-center overflow-hidden bg-black pl-2 text-[16px] leading-5 text-[#eee]">
        <button className="w-[142px] shrink-0 text-left text-[18px] font-bold whitespace-nowrap">Workspace 1</button>
        {TASKS.map((task, i) => (
            <button key={i} className="flex w-[129px] shrink-0 items-center gap-1 text-left">
                <span className="flex w-[74px] shrink-0 justify-center">{task.icon}</span>
                <span className="whitespace-nowrap">
                    {task.lines.map((line) => <span key={line} className="block">{line}</span>)}
                </span>
            </button>
        ))}
        <div className="flex flex-1 items-center justify-between pr-[10px] pl-[6px]">
            <CalcApp />
            <TerminalApp />
            <Firefox className="h-[57px] w-14" />
            <PaintApp />
            <XPdf />
            <EditApp />
            <Calculator />
        </div>
    </div>
);

const RemoteScreen = () => (
    <section className={clsx('flex aspect-[1380/1034] min-w-0 flex-1 flex-col overflow-hidden text-[15px] text-[#1c1c1c]', UI_FONT)}>
        <TitleBar />
        <MenuAndToolbar />
        <div className="flex min-h-0 flex-1">
            <DrawingBar />
            <PagesPanel />
            <Splitter side="left" />
            <Workspace />
            <div className="flex shrink-0 bg-[#c0c0c0]">
                <Splitter side="right" />
                <PropertiesPanel />
                <DeckBar />
            </div>
        </div>
        <StatusBar />
        <Taskbar />
    </section>
);

const Timeline = () => (
    <footer className="flex h-[37px] items-center text-[23px] leading-9 font-medium text-[#c0392b]">
        <div className="relative flex h-[21px] flex-1 items-center">
            <div className="h-[7px] w-full bg-[#b8cc9a]" />
            <div className="absolute inset-0 grid grid-cols-4">
                {[0, 1, 2, 3].map((i) => <div key={i} className="border-l border-[#86ab58]" />)}
            </div>
            <button className="absolute top-[-2px] right-[-14px] size-[29px] rounded-full bg-[#6f8c48] shadow-md" aria-label="Playback position" />
        </div>
        <div className="flex w-[137px] items-center justify-end gap-[14px]">
            <span className="size-[14px] rounded-full bg-[#dd524c]" />
            <span className="pb-1 leading-8">Live</span>
        </div>
    </footer>
);

// Leading edge of the neighbouring agents' column
const NextColumn = () => (
    <div className="flex w-[2px] shrink-0 flex-col overflow-hidden">
        <div className="mt-[44px] h-[6px] bg-[#444]" />
        <div className="mt-[61px] h-[15px] bg-[#d6d6d2]" />
        <div className="h-[35px] bg-[#f3f3f0]" />
        <div className="h-[248px] bg-[#ebebf8]" />
        <div className="h-[26px] bg-black" />
        <div className="mt-[66px] h-[8px] rounded-l-full bg-black" />
        <div className="mt-[69px] h-[299px] bg-[#10233f]" />
        <div className="h-[26px] bg-black" />
        <div className="mt-[65px] h-[8px] rounded-l-full bg-black" />
        <div className="mt-[71px] h-4 bg-[#a6a6a6]" />
        <div className="h-[35px] bg-[#bdbdbd]" />
        <div className="flex-1 bg-[#6e6e6e]" />
    </div>
);

export default function App() {
    return (
        <div className="flex min-h-screen bg-[#fffffa] pl-[15px] font-['Noto_Sans_CJK_SC',sans-serif]">
            <main className="min-w-0 flex-1">
                <Header />
                <div className="flex h-[59px] items-center justify-center border border-[#d9dfc8] pb-1">
                    <h2 className="flex items-baseline gap-[6px] leading-9 font-bold">
                        <span className="text-[22px] text-[#a3a3a1]">Using computer to:</span>
                        <span className="text-[26px] text-[#333b4d]">Work on HARMONIZATION visual</span>
                    </h2>
                </div>
                <div className="flex">
                    <Thoughts />
                    <RemoteScreen />
                </div>
                <Timeline />
            </main>
            <div className="w-[29px] shrink-0" />
            <NextColumn />
        </div>
    );
}
